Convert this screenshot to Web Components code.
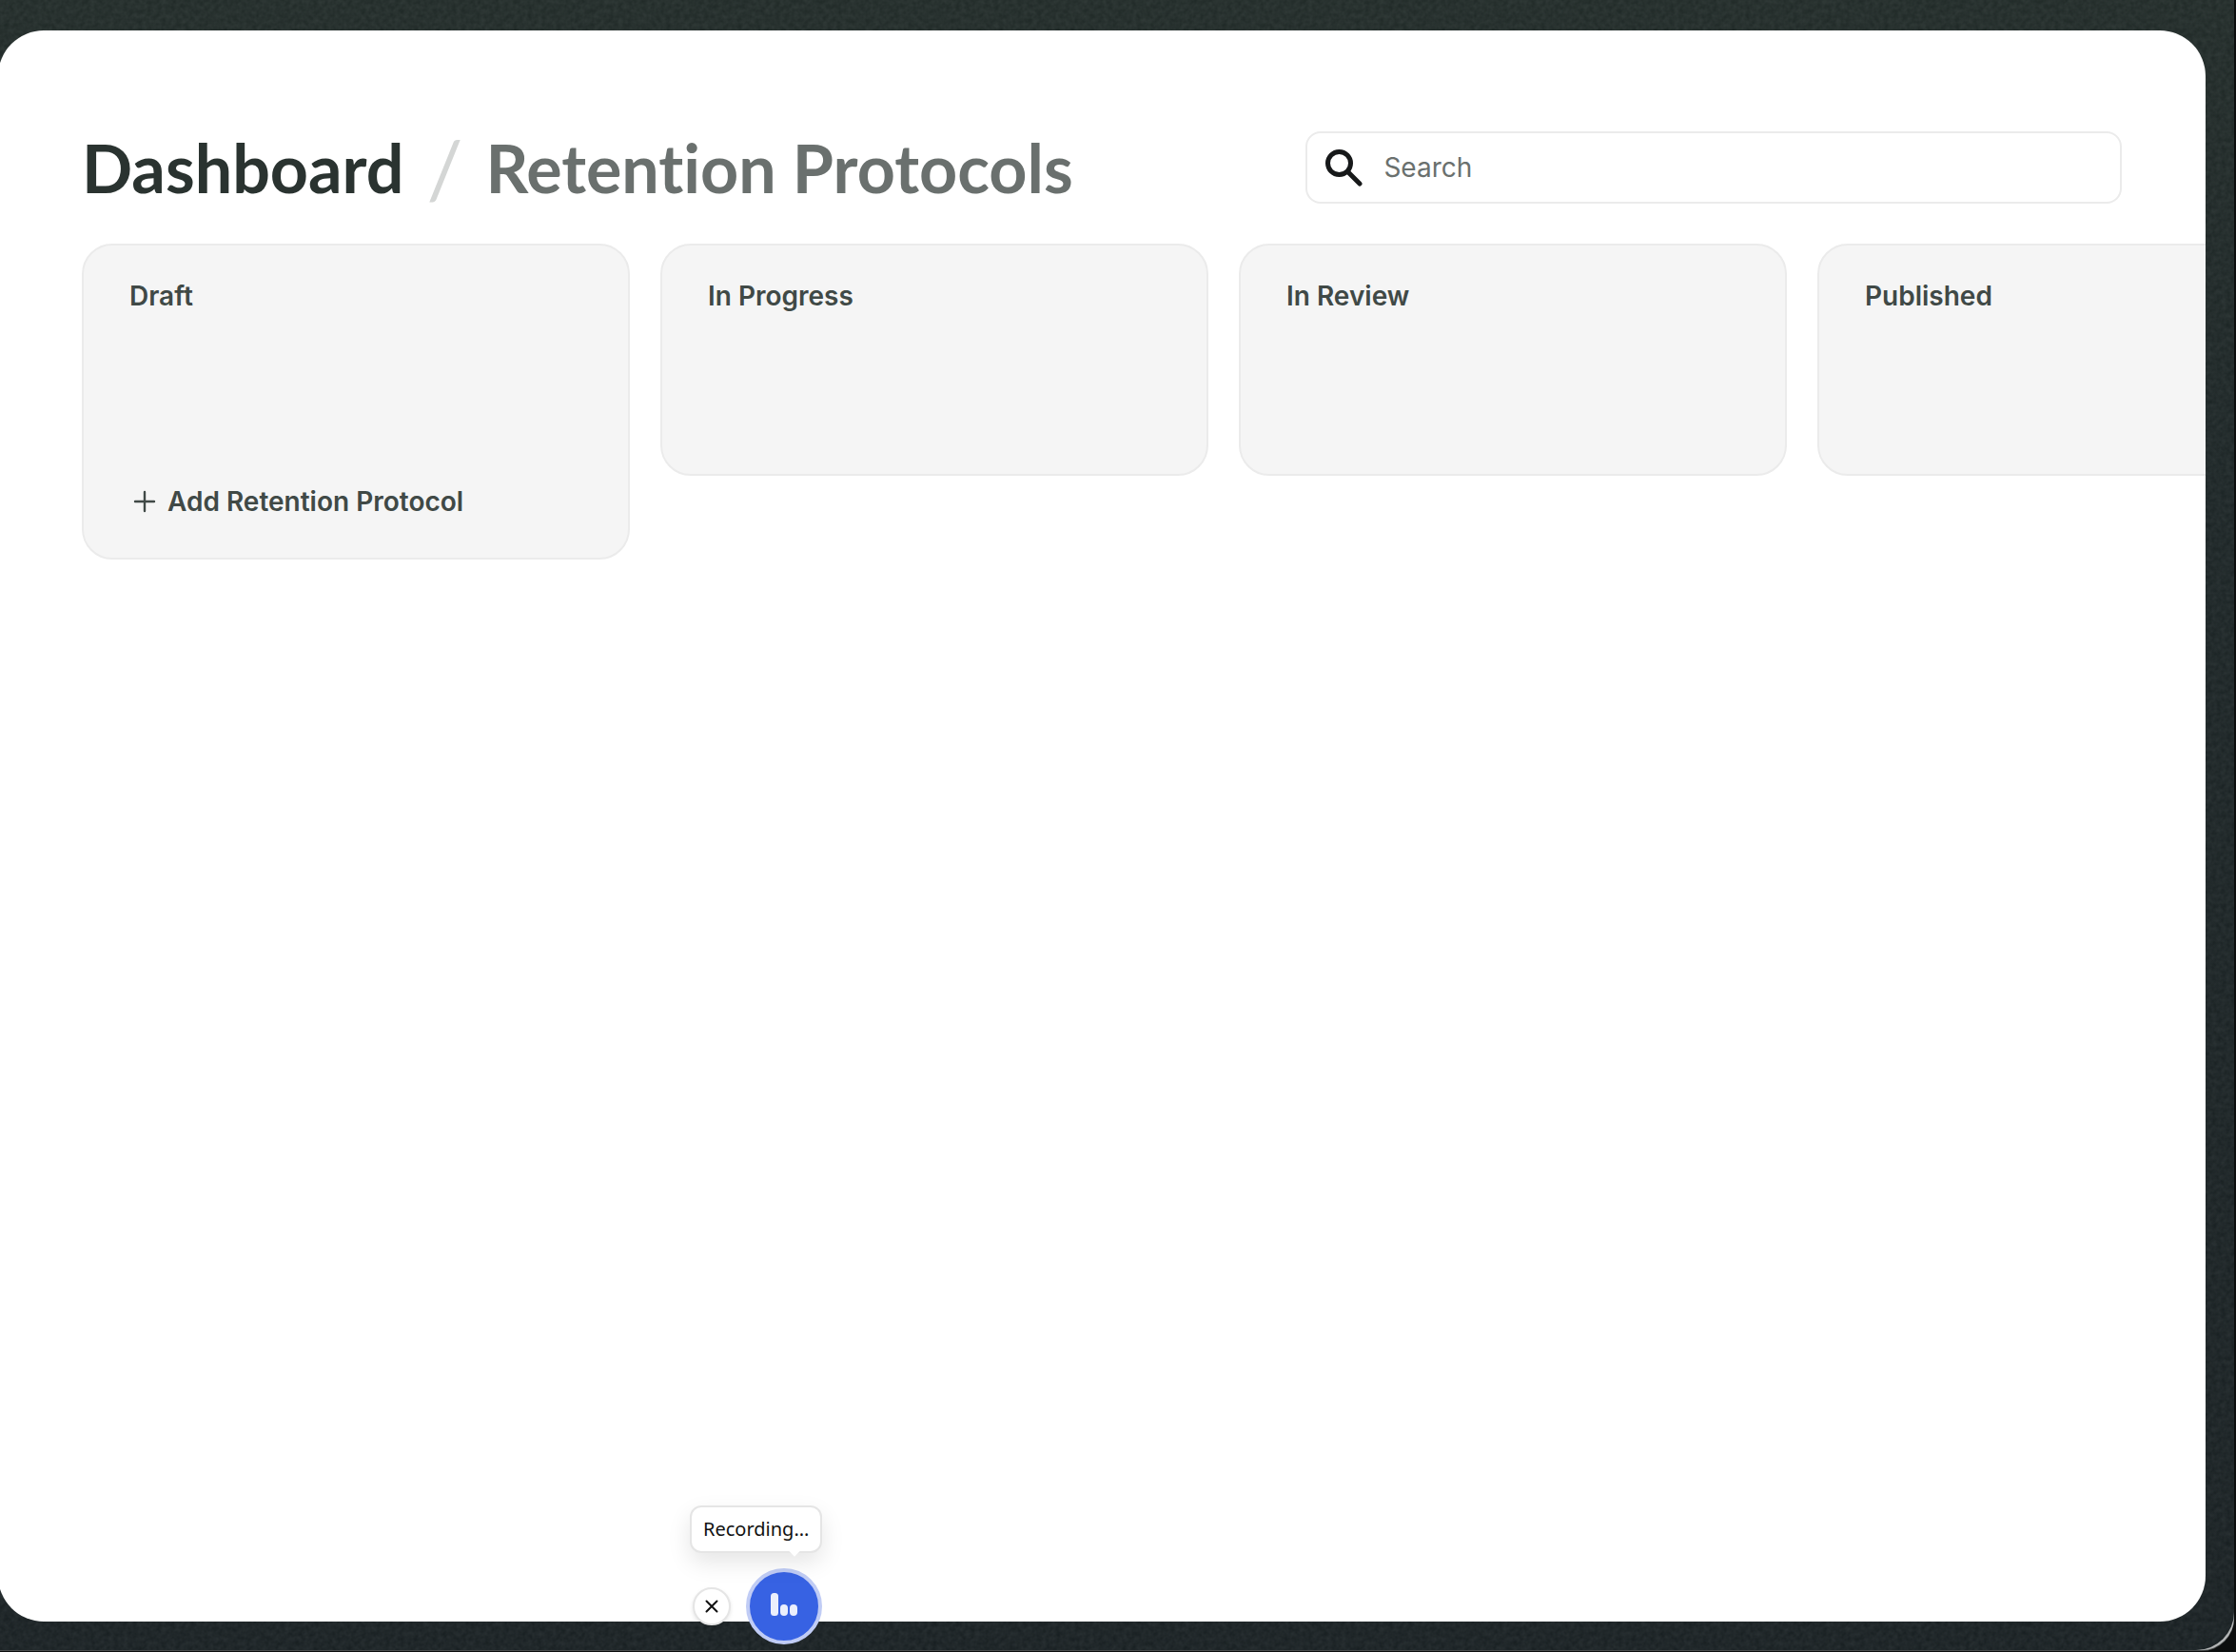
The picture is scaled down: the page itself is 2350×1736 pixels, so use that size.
<!DOCTYPE html>
<html lang="en">
<head>
<meta charset="utf-8">
<title>Retention Protocols</title>
<style>
    body {
        margin: 0;
        background: #0c0e0e;
        font-family: Inter, "Liberation Sans", sans-serif;
        --ink: #2a3330;
        --text-color: #404946;
        --muted: #6a706e;
        --line: #ebebeb;
        --panel: #f5f5f5;
    }
</style>
</head>
<body>
<app-shell>
    <app-header slot="header" section="Dashboard" page="Retention Protocols">
        <app-search placeholder="Search"></app-search>
    </app-header>
    <app-board>
        <app-column name="Draft">
            <app-add-button>Add Retention Protocol</app-add-button>
        </app-column>
        <app-column name="In Progress"></app-column>
        <app-column name="In Review"></app-column>
        <app-column name="Published"></app-column>
    </app-board>
    <app-recorder slot="overlay">Recording...</app-recorder>
</app-shell>

<script>
const createTemplate = (html) => {
    const template = document.createElement('template');
    template.innerHTML = html;
    return template;
};

/**
 * Base class, clones the template of the component into its shadow root.
 */
class AppElement extends HTMLElement {
    constructor() {
        super();
        this.attachShadow({ mode: 'open' });
        this.shadowRoot.appendChild(this.constructor.template.content.cloneNode(true));
    }
}

class AppShell extends AppElement {
    static template = createTemplate(`
<style>
    :host {
        display: block;
        box-sizing: border-box;
        height: 100vh;
        padding: 0 2px 2px 0;
    }
    /* light rim, only shows where the two corner radii differ */
    .rim {
        height: 100%;
        border-bottom-right-radius: 34px;
        background: #b4b6b6;
        box-shadow: 0 1px 0 #4a4e4e;
    }
    .frame {
        position: relative;
        box-sizing: border-box;
        height: 100%;
        padding: 32px 30px 30px 0;
        border-bottom-right-radius: 40px;
        background: linear-gradient(#28322f, #222b2c 30%, #1e2528);
    }
    .grain {
        position: absolute;
        inset: 0;
        width: 100%;
        height: 100%;
        opacity: 0.2;
        border-bottom-right-radius: 40px;
    }
    .sheet {
        position: relative;
        box-sizing: border-box;
        height: 100%;
        margin-left: -2px;
        padding: 104px 0 0 88px;
        border-radius: 48px;
        background: white;
        overflow: hidden;
    }
</style>
<div class="rim">
    <div class="frame">
        <svg class="grain" aria-hidden="true">
            <filter id="noise" x="0" y="0" width="100%" height="100%" color-interpolation-filters="sRGB">
                <feTurbulence type="fractalNoise" baseFrequency="0.2" numOctaves="2"/>
                <feColorMatrix values="0.4 0 0 0 -0.03  0.4 0 0 0 0  0.4 0 0 0 0  0 0 0 0 1"/>
            </filter>
            <rect width="100%" height="100%" filter="url(#noise)"/>
        </svg>
        <main class="sheet">
            <slot name="header"></slot>
            <slot></slot>
        </main>
        <slot name="overlay"></slot>
    </div>
</div>
`);
}

class AppHeader extends AppElement {
    static template = createTemplate(`
<style>
    :host {
        display: flex;
        align-items: center;
        justify-content: space-between;
        height: 80px;
        padding-right: 88px;
        margin-bottom: 40px;
    }
    nav {
        display: flex;
        align-items: center;
        gap: 24px;
        font-family: Lato, sans-serif;
        font-size: 70px;
        line-height: 80px;
        font-weight: 700;
        font-variant-ligatures: none;
        white-space: nowrap;
    }
    a {
        color: var(--ink);
        text-decoration: none;
    }
    .slash {
        font-size: 84px;
        font-weight: 400;
        color: #d4d6d5;
    }
    h1 {
        margin: 0;
        font: inherit;
        color: var(--muted);
    }
</style>
<nav>
    <a id="section" href="#"></a>
    <span class="slash">/</span>
    <h1 id="page"></h1>
</nav>
<slot></slot>
`);

    connectedCallback() {
        this.shadowRoot.querySelector('#section').textContent = this.getAttribute('section');
        this.shadowRoot.querySelector('#page').textContent = this.getAttribute('page');
    }
}

class AppSearch extends AppElement {
    static template = createTemplate(`
<style>
    :host {
        display: block;
        width: 40%;
    }
    label {
        display: flex;
        align-items: center;
        gap: 22px;
        box-sizing: border-box;
        height: 76px;
        padding: 0 18px;
        border: 2px solid var(--line);
        border-radius: 16px;
    }
    svg {
        flex: none;
        width: 40px;
        height: 40px;
    }
    input {
        flex: 1;
        min-width: 0;
        padding: 0;
        border: none;
        outline: none;
        background: transparent;
        font-family: inherit;
        font-size: 28px;
        line-height: 36px;
        color: var(--ink);
    }
    input::placeholder {
        color: var(--muted);
        opacity: 1;
    }
</style>
<label>
    <svg viewBox="0 0 40 40" fill="none" stroke="#17191a" aria-hidden="true">
        <circle cx="15.5" cy="15.5" r="12" stroke-width="5"/>
        <path d="M24.5 24.5L37 37" stroke-width="5" stroke-linecap="round"/>
    </svg>
    <input id="query" type="search" aria-label="Search">
</label>
`);

    connectedCallback() {
        this.shadowRoot.querySelector('#query').placeholder = this.getAttribute('placeholder');
    }
}

class AppBoard extends AppElement {
    static template = createTemplate(`
<style>
    :host {
        display: flex;
        align-items: flex-start;
        gap: 32px;
    }
</style>
<slot></slot>
`);
}

class AppColumn extends AppElement {
    static template = createTemplate(`
<style>
    :host {
        display: flex;
        flex: none;
        flex-direction: column;
        box-sizing: border-box;
        width: 576px;
        padding: 35px 48px 37px;
        border: 2px solid var(--line);
        border-radius: 32px;
        background: var(--panel);
    }
    h2 {
        margin: 0;
        font-size: 28px;
        line-height: 36px;
        font-weight: 600;
        color: var(--text-color);
    }
    .cards {
        min-height: 132px;
    }
</style>
<h2 id="name"></h2>
<div class="cards"></div>
<slot></slot>
`);

    connectedCallback() {
        this.shadowRoot.querySelector('#name').textContent = this.getAttribute('name');
    }
}

class AppAddButton extends AppElement {
    static template = createTemplate(`
<style>
    :host {
        display: block;
        padding-top: 44px;
    }
    button {
        display: flex;
        align-items: center;
        gap: 12px;
        height: 44px;
        padding: 0 4px;
        border: none;
        background: transparent;
        font-family: inherit;
        font-size: 28px;
        line-height: 36px;
        font-weight: 600;
        color: var(--text-color);
        white-space: nowrap;
        cursor: pointer;
    }
    svg {
        width: 24px;
        height: 24px;
    }
</style>
<button type="button">
    <svg viewBox="0 0 24 24" fill="none" stroke="currentColor" stroke-width="2.4" stroke-linecap="round" aria-hidden="true">
        <path d="M12 2V22M2 12H22"/>
    </svg>
    <slot></slot>
</button>
`);
}

class AppRecorder extends AppElement {
    static template = createTemplate(`
<style>
    :host {
        position: absolute;
        left: 725px;
        bottom: 6px;
        display: flex;
        flex-direction: column;
        gap: 16px;
        font-family: "Noto Sans", sans-serif;
    }
    .tip {
        position: relative;
        padding: 8px 12px;
        border: 2px solid #e5e5e5;
        border-radius: 12px;
        background: white;
        box-shadow: 0 10px 24px rgba(0, 0, 0, 0.1);
        font-size: 20px;
        line-height: 30px;
        color: #111;
    }
    .tip::after {
        content: "";
        position: absolute;
        right: 23px;
        bottom: -4px;
        width: 8px;
        height: 8px;
        background: white;
        transform: rotate(45deg);
    }
    .controls {
        display: flex;
        align-items: center;
        justify-content: space-between;
        padding-left: 3px;
    }
    button {
        display: flex;
        align-items: center;
        justify-content: center;
        box-sizing: border-box;
        padding: 0;
        border-radius: 50%;
        cursor: pointer;
    }
    .close {
        width: 40px;
        height: 40px;
        border: 2px solid #e5e5e5;
        background: white;
        box-shadow: 0 2px 4px rgba(0, 0, 0, 0.1);
    }
    .record {
        width: 80px;
        height: 80px;
        border: 4px solid #c0ccf5;
        background: #3762e3;
    }
</style>
<div class="tip" role="status"><slot></slot></div>
<div class="controls">
    <button class="close" type="button" aria-label="Close">
        <svg width="14" height="14" viewBox="0 0 14 14" fill="none" stroke="#111" stroke-width="2" stroke-linecap="round">
            <path d="M1.5 1.5L12.5 12.5M12.5 1.5L1.5 12.5"/>
        </svg>
    </button>
    <button class="record" type="button" aria-label="Stop recording">
        <svg width="28" height="28" viewBox="0 0 28 28" fill="#ebeffc">
            <rect x="0" y="0" width="8" height="24" rx="3.5"/>
            <rect x="10" y="12" width="8" height="12" rx="4"/>
            <rect x="20" y="12" width="8" height="12" rx="4"/>
        </svg>
    </button>
</div>
`);
}

window.customElements.define('app-shell', AppShell);
window.customElements.define('app-header', AppHeader);
window.customElements.define('app-search', AppSearch);
window.customElements.define('app-board', AppBoard);
window.customElements.define('app-column', AppColumn);
window.customElements.define('app-add-button', AppAddButton);
window.customElements.define('app-recorder', AppRecorder);
</script>
</body>
</html>
